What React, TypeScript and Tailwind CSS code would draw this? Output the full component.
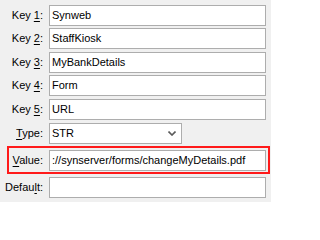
import React from "react";

const font = { fontFamily: '"Liberation Sans", Arial, sans-serif' };

function Label({ pre, u, post, w }: { pre: string; u: string; post: string; w: string }) {
  return (
    <div className={`${w} shrink-0 text-right text-[11px] leading-[21px] text-[#000000]`}>
      {pre}
      <span className="underline underline-offset-[2px]">{u}</span>
      {post}
    </div>
  );
}

function Field({ value }: { value: string }) {
  return (
    <div className="ml-[6px] w-[217px] h-[21px] shrink-0 border border-[#adadad] bg-white pl-[2px] text-[11px] leading-[19px] text-black whitespace-nowrap overflow-hidden">
      {value}
    </div>
  );
}

export default function App() {
  return (
    <div style={font} className="w-[271px] h-[202px] bg-[#f0f0f0] overflow-hidden flex flex-col">
      <div className="flex mt-[5px]">
        <Label w="w-[43px]" pre="Key " u="1" post=":" />
        <Field value="Synweb" />
      </div>
      <div className="flex mt-[2px]">
        <Label w="w-[43px]" pre="Key " u="2" post=":" />
        <Field value="StaffKiosk" />
      </div>
      <div className="flex mt-[3px]">
        <Label w="w-[43px]" pre="Key " u="3" post=":" />
        <Field value="MyBankDetails" />
      </div>
      <div className="flex mt-[2px]">
        <Label w="w-[43px]" pre="Key " u="4" post=":" />
        <Field value="Form" />
      </div>
      <div className="flex mt-[3px]">
        <Label w="w-[43px]" pre="Key " u="5" post=":" />
        <Field value="URL" />
      </div>
      <div className="flex mt-[3px]">
        <Label w="w-[43px]" pre="" u="T" post="ype:" />
        <div className="ml-[6px] w-[133px] h-[21px] border border-[#adadad] bg-white pl-[2px] flex items-center justify-between text-[11px] leading-[19px] text-black">
          <span>STR</span>
          <svg width="8" height="5" viewBox="0 0 8 5" className="mr-[5px]">
            <path d="M0.5 0.5 L4 4 L7.5 0.5" fill="none" stroke="#5a5a5a" strokeWidth="1.6" />
          </svg>
        </div>
      </div>
      <div className="flex ml-[7px] mt-[2px] w-[263px] border-2 border-[#ff1a1a] pt-[2px] pb-[1px] pr-[2px]">
        <Label w="w-[34px]" pre="" u="V" post="alue:" />
        <Field value="://synserver/forms/changeMyDetails.pdf" />
      </div>
      <div className="flex mt-[3px]">
        <Label w="w-[43px]" pre="Defau" u="l" post="t:" />
        <Field value="" />
      </div>
    </div>
  );
}
